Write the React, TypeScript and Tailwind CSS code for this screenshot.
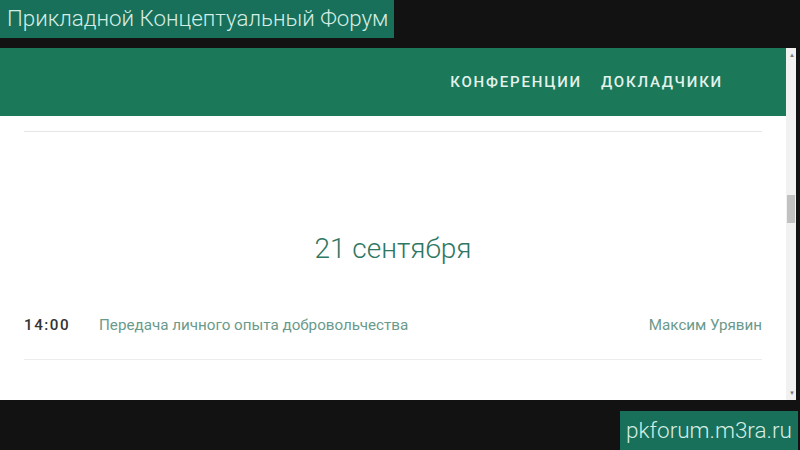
const font = { fontFamily: "Roboto, 'Noto Sans', sans-serif" };

export default function App() {
  return (
    <div className="flex h-[450px] w-[800px] flex-col overflow-hidden bg-[#121212]" style={font}>
      {/* caption */}
      <div className="flex h-[48px] items-start">
        <div className="flex h-[38px] w-[394px] items-center bg-[#18705a] pl-[7px] text-[22.3px] font-light text-[#d4ede4]">
          Прикладной Концептуальный Форум
        </div>
      </div>

      {/* browser viewport */}
      <div className="flex h-[352px]">
        <div className="flex w-[786px] flex-col bg-white">
          <header className="flex h-[68px] items-center justify-end gap-[19px] bg-[#1b7858] pr-[63px] text-[15px] font-medium tracking-[1.8px] text-[#e3f2ec]">
            <span>КОНФЕРЕНЦИИ</span>
            <span>ДОКЛАДЧИКИ</span>
          </header>
          <div className="px-[24px]">
            <div className="mt-[15px] h-px bg-[#e6e6e6]" />
            <div className="mt-[96px] text-center text-[28px] font-light text-[#2e7763]">21 сентября</div>
            <div className="mt-[44px] flex items-center text-[15.2px]">
              <span className="w-[75px] font-medium tracking-[1.5px] text-[#333]">14:00</span>
              <span className="flex-1 text-[#6a9a8c]">Передача личного опыта добровольчества</span>
              <span className="text-[#6a9a8c]">Максим Урявин</span>
            </div>
            <div className="mt-[22px] h-px bg-[#ececec]" />
          </div>
        </div>
        <div className="relative w-[10px] bg-[#f1f1f1]">
          <div className="absolute left-[3px] top-[4px] text-[6px] leading-none text-[#777]">▲</div>
          <div className="absolute left-[1px] top-[147px] h-[28px] w-[8px] bg-[#c1c1c1]" />
          <div className="absolute bottom-[4px] left-[3px] text-[6px] leading-none text-[#777]">▼</div>
        </div>
      </div>

      {/* footer caption */}
      <div className="flex flex-1 items-end justify-end pr-[2px]">
        <div className="flex h-[39px] w-[178px] items-center justify-center bg-[#18705a] text-[22.5px] font-light text-[#d4ede4]">
          pkforum.m3ra.ru
        </div>
      </div>
    </div>
  );
}
